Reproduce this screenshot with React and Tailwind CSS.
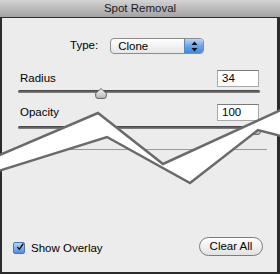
const Stepper = () => (
  <svg width="7" height="11" viewBox="0 0 7 11">
    <path d="M3.5 0.5L6.5 4H0.5Z" fill="#111" />
    <path d="M3.5 10.5L6.5 7H0.5Z" fill="#111" />
  </svg>
);

const Thumb = () => (
  <svg width="12" height="11" viewBox="0 0 12 11">
    <defs>
      <linearGradient id="thumbFill" x1="0" y1="0" x2="0" y2="1">
        <stop offset="0" stopColor="#f4f4f4" />
        <stop offset="1" stopColor="#b8b8b8" />
      </linearGradient>
    </defs>
    <path d="M6 0.6L11.3 5.2V8.2Q11.3 10.4 9 10.4H3Q0.7 10.4 0.7 8.2V5.2Z" fill="url(#thumbFill)" stroke="#555" strokeWidth="0.9" />
  </svg>
);

function Slider({ at, className }) {
  return (
    <div className={'relative h-[11px] ' + className}>
      <div className="mt-[2px] h-[3px] rounded-full bg-gradient-to-b from-[#3e3e3e] to-[#8a8a8a]" />
      <div className="absolute top-0" style={{ left: at }}>
        <Thumb />
      </div>
    </div>
  );
}

function Field({ value }) {
  return (
    <div className="w-[42px] h-[17px] bg-white border border-[#a8a8a8] border-t-[#7a7a7a] pl-[4px] leading-[15px]">
      {value}
    </div>
  );
}

export default function App() {
  return (
    <div className="relative w-[280px] h-[274px] overflow-hidden bg-[#ececec] font-['Liberation_Sans',Arial,sans-serif] text-[11.5px] text-black">
      <div className="h-[18px] border-b border-[#2e2e2e] bg-gradient-to-b from-[#d3d3d3] to-[#a3a3a3] flex items-center justify-center text-[#1a1a1a]">
        Spot Removal
      </div>

      <div className="h-[256px] border-l-2 border-r-[3px] border-b-2 border-[#2b2b2b] flex flex-col">
        <div className="mt-[20px] pl-[68px] flex items-center h-[16px]">
          <span>Type:</span>
          <div className="ml-[12px] w-[94px] h-[16px] flex rounded-[4px] border border-[#8c8c8c] overflow-hidden bg-gradient-to-b from-white to-[#e6e6e6]">
            <span className="flex-1 pl-[7px] leading-[14px]">Clone</span>
            <div className="w-[19px] flex items-center justify-center border-l border-[#5a86c4] bg-gradient-to-b from-[#b9d6f6] via-[#6ea4ea] to-[#3f86e2]">
              <Stepper />
            </div>
          </div>
        </div>

        <div className="mt-[16px] px-[18px] h-[17px] flex items-center justify-between">
          <span>Radius</span>
          <Field value="34" />
        </div>
        <Slider at={77} className="mt-[1px] ml-[16px] mr-[17px]" />

        <div className="mt-[5px] px-[18px] h-[17px] flex items-center justify-between">
          <span>Opacity</span>
          <Field value="100" />
        </div>
        <Slider at={231} className="mt-[3px] ml-[16px] mr-[17px]" />

        <div className="mt-[14px] ml-[14px] mr-[10px] h-px bg-[#9a9a9a]" />

        <div className="mt-auto mb-[15px] pl-[11px] pr-[14px] flex items-center justify-between">
          <label className="flex items-center gap-[6px] mt-[3px]">
            <span className="w-[12px] h-[12px] rounded-[2px] border border-[#4f78ad] bg-gradient-to-b from-[#b6d3f3] to-[#4c8ee0] flex items-center justify-center">
              <svg width="12" height="12" viewBox="0 0 12 12" className="-mt-[2px] ml-[2px]">
                <path d="M2.5 6.5L5 9.5L10.5 1.5" fill="none" stroke="#111" strokeWidth="2" strokeLinecap="round" strokeLinejoin="round" />
              </svg>
            </span>
            <span>Show Overlay</span>
          </label>
          <button className="w-[64px] h-[19px] rounded-full border border-[#7c7c7c] bg-gradient-to-b from-white to-[#e2e2e2] leading-[17px] text-center">
            Clear All
          </button>
        </div>
      </div>

      <svg className="absolute inset-0" width="280" height="274" viewBox="0 0 280 274">
        <polygon
          points="-5,157 98,113 163,164 285,108 285,137 258,130 190,183 107,137 -5,172"
          fill="#fff"
          stroke="#6a6a6a"
          strokeWidth="2.5"
          strokeLinejoin="miter"
        />
      </svg>
    </div>
  );
}
